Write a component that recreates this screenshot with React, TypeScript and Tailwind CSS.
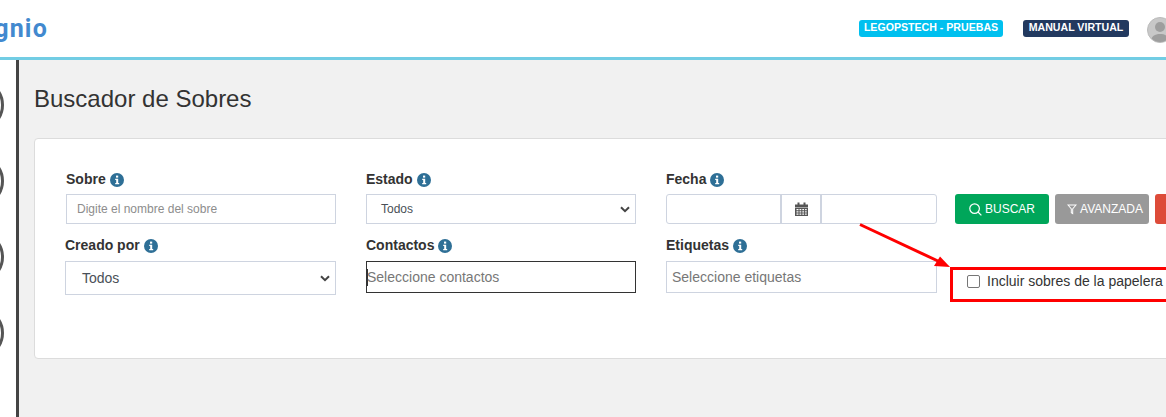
const LABEL = "flex items-center gap-[4px] text-[14px] leading-[17px] font-bold text-[#333]";

function Info() {
  return (
    <svg width="14" height="14" viewBox="0 0 14 14" className="shrink-0">
      <circle cx="7" cy="7" r="7" fill="#2e6f96" />
      <rect x="6" y="2.6" width="2.2" height="2" fill="#fff" />
      <path d="M5.2 5.8h3v4.2h1v1.3H5.2V10h1V7.1h-1z" fill="#fff" />
    </svg>
  );
}

function Chevron() {
  return (
    <svg width="10" height="7" viewBox="0 0 10 7" className="shrink-0">
      <path d="M1 1.2l4 4 4-4" fill="none" stroke="#444" strokeWidth="2" />
    </svg>
  );
}

function Field({ label, className, children }: { label: string; className: string; children: React.ReactNode }) {
  return (
    <div className={"shrink-0 " + className}>
      <div className={LABEL}>
        <span>{label}</span>
        <Info />
      </div>
      {children}
    </div>
  );
}

function SideCircle() {
  return <div className="ml-[-48px] h-[52px] w-[52px] shrink-0 rounded-full border-[3px] border-[#555]" />;
}

export default function App() {
  return (
    <div className="relative flex h-[417px] w-[1166px] flex-col overflow-hidden bg-white font-['Liberation_Sans',Arial,sans-serif]">
      <header className="flex h-[60px] shrink-0 items-center justify-between border-b-[3px] border-[#72cde4] bg-white pb-[1px]">
        <div className="mt-[2px] flex w-[48px] justify-end overflow-hidden whitespace-nowrap font-['Roboto',sans-serif] text-[25px] font-bold leading-[30px] tracking-[1.2px] text-[#4289cf]">
          gnio
        </div>
        <div className="flex items-center">
          <span className="flex h-[17px] w-[144px] items-center justify-center rounded-[3px] bg-[#00c0ef] text-[10.6px] font-bold text-white">
            LEGOPSTECH - PRUEBAS
          </span>
          <span className="ml-[20px] flex h-[17px] w-[106px] items-center justify-center rounded-[3px] bg-[#22395f] text-[10.6px] font-bold text-white">
            MANUAL VIRTUAL
          </span>
          <div className="ml-[18px] mr-[-7px] mt-[4px] h-[26px] w-[26px] overflow-hidden rounded-full border border-[#bbb] bg-[#c8c8c8]">
            <svg width="24" height="24" viewBox="0 0 24 24">
              <circle cx="12" cy="9" r="5" fill="#9e9e9e" />
              <path d="M3 24c0-6 4-8 9-8s9 2 9 8z" fill="#9e9e9e" />
            </svg>
          </div>
        </div>
      </header>

      <div className="flex min-h-0 flex-1">
        <aside className="flex w-[19px] shrink-0 flex-col gap-[24px] overflow-hidden border-r-[3px] border-[#444] bg-white pt-[19px]">
          <SideCircle />
          <SideCircle />
          <SideCircle />
          <SideCircle />
        </aside>
        <main className="min-w-0 flex-1 overflow-hidden bg-[#f1f1f1] pl-[15px]">
          <h1 className="pt-[25px] text-[24px] font-normal leading-[28px] text-[#333]">Buscador de Sobres</h1>
          <section className="relative mt-[25px] h-[221px] w-[1200px] rounded-[4px] border border-[#dcdcdc] bg-white pl-[31px] pt-[32px]">
            <div className="flex">
              <Field label="Sobre" className="w-[270px]">
                <div className="mt-[6px] flex h-[30px] items-center border border-[#ced4e0] pl-[10px] text-[12px] text-[#8d8d8d]">
                  Digite el nombre del sobre
                </div>
              </Field>
              <Field label="Estado" className="ml-[30px] w-[270px]">
                <div className="mt-[6px] flex h-[30px] items-center justify-between border border-[#ced4e0] pl-[14px] pr-[5px] text-[12px] text-[#495057]">
                  <span>Todos</span>
                  <Chevron />
                </div>
              </Field>
              <Field label="Fecha" className="ml-[30px] w-[271px]">
                <div className="mt-[6px] flex h-[30px] rounded-[3px] border border-[#ced4e0]">
                  <div className="w-[113px]" />
                  <div className="flex w-[42px] items-center justify-center border-x-2 border-[#ced4e0]">
                    <svg width="13" height="14" viewBox="0 0 13 14">
                      <path d="M0 2.5h13V5H0zM2.5.5h2v2h-2zM8.5.5h2v2h-2z" fill="#555" />
                      <path fillRule="evenodd" d="M0 5.5h13V14H0zM1.5 7v1.2h2V7zm3 0v1.2h1.8V7zm2.8 0v1.2h1.8V7zm2.8 0v1.2h1.6V7zM1.5 9.3v1.2h2V9.3zm3 0v1.2h1.8V9.3zm2.8 0v1.2h1.8V9.3zm2.8 0v1.2h1.6V9.3zM1.5 11.5v1.2h2v-1.2zm3 0v1.2h1.8v-1.2zm2.8 0v1.2h1.8v-1.2zm2.8 0v1.2h1.6v-1.2z" fill="#555" />
                    </svg>
                  </div>
                </div>
              </Field>
              <div className="ml-[18px] mt-[23px] flex shrink-0 gap-[6px]">
                <button className="flex h-[30px] w-[94px] items-center justify-center gap-[3px] rounded-[3px] bg-[#00a65a] text-[12px] text-white">
                  <svg width="13" height="13" viewBox="0 0 13 13" fill="none" stroke="#fff" strokeWidth="1.2">
                    <circle cx="5.6" cy="5.6" r="4.8" />
                    <path d="M9 9l3.4 3.4" />
                  </svg>
                  BUSCAR
                </button>
                <button className="flex h-[30px] w-[94px] items-center justify-center gap-[3px] rounded-[3px] bg-[#999] pl-[6px] text-[12px] text-white">
                  <svg width="10" height="11" viewBox="0 0 10 11">
                    <path fillRule="evenodd" d="M0 .5h10L6.2 5v5.5L3.8 9V5zM2 1.5l2.8 3.2v3.8l.4.3V4.7L8 1.5z" fill="#fff" />
                  </svg>
                  AVANZADA
                </button>
                <button className="h-[30px] w-[94px] rounded-[3px] bg-[#dd4b39]" />
              </div>
            </div>
            <div className="mt-[13px] flex">
              <Field label="Creado por" className="ml-[-1px] w-[271px]">
                <div className="mt-[7px] flex h-[34px] items-center justify-between border border-[#ced4e0] pl-[16px] pr-[5px] text-[14px] text-[#495057]">
                  <span>Todos</span>
                  <Chevron />
                </div>
              </Field>
              <Field label="Contactos" className="ml-[30px] w-[270px]">
                <div className="mt-[7px] flex h-[32px] items-center border border-[#333] text-[14px] text-[#777]">
                  <span className="mr-[-1px] h-[17px] w-[1px] bg-[#333]" />
                  Seleccione contactos
                </div>
              </Field>
              <Field label="Etiquetas" className="ml-[30px] w-[271px]">
                <div className="mt-[7px] flex h-[32px] items-center border border-[#ced4e0] pl-[5px] text-[14px] text-[#777]">
                  Seleccione etiquetas
                </div>
              </Field>
              <div className="ml-[30px] mt-[36px] flex h-[16px] shrink-0 items-center gap-[7px] whitespace-nowrap text-[14px] text-[#333]">
                <span className="h-[13px] w-[13px] rounded-[2px] border border-[#767676] bg-white" />
                Incluir sobres de la papelera
              </div>
            </div>
          </section>
        </main>
      </div>

      <div className="pointer-events-none absolute left-[950px] top-[267px] h-[35px] w-[260px] border-[3px] border-[#ff0000]" />
      <svg className="pointer-events-none absolute left-[855px] top-[220px]" width="100" height="50" viewBox="0 0 100 50">
        <path d="M5 4.5L84 41.5" stroke="#ff0000" strokeWidth="3" fill="none" />
        <path d="M95 47L85 36.5L79 46z" fill="#ff0000" />
      </svg>
    </div>
  );
}
